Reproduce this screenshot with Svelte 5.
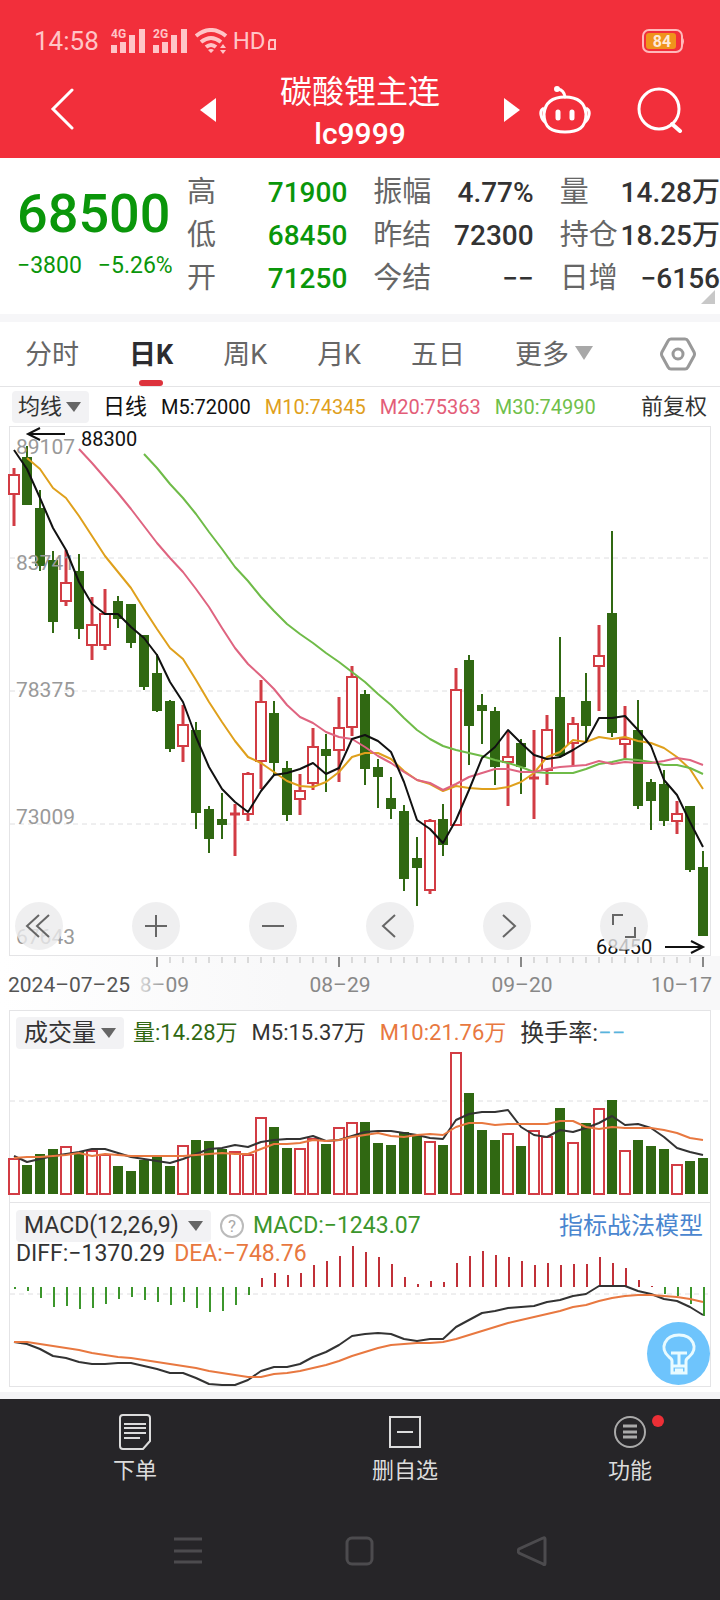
<!--
  Futures quote page: header, quote summary, daily K chart, volume, MACD, bottom bar.
  Chart rows are kept in canvas units, one column every STEP units.
-->
<script>
  const STEP = 13;
  const X0 = 14;
  const x = (i) => X0 + i * STEP;

  const tabs = ['分时', '日K', '周K', '月K', '五日'];
  let activeTab = $state('日K');

  const stats = [
    [['高', '71900', 'down'], ['低', '68450', 'down'], ['开', '71250', 'down']],
    [['振幅', '4.77%', ''], ['昨结', '72300', ''], ['今结', '−−', '']],
    [['量', '14.28万', ''], ['持仓', '18.25万', ''], ['日增', '−6156', '']],
  ];

  // [rising, high, body top, body bottom, low, volume top, macd end]
  const rows = [
    [1, 468, 474, 495, 526, 1158, 1289], [0, 446, 457, 505, 505, 1165, 1291],
    [0, 490, 508, 566, 571, 1154, 1298], [0, 551, 560, 622, 633, 1149, 1307],
    [1, 550, 582, 602, 606, 1146, 1306], [0, 554, 571, 629, 639, 1152, 1309],
    [1, 597, 624, 646, 660, 1150, 1308], [1, 589, 613, 646, 650, 1154, 1304],
    [0, 596, 601, 619, 628, 1166, 1299], [0, 604, 604, 643, 648, 1171, 1297],
    [0, 635, 635, 687, 690, 1160, 1300], [0, 654, 673, 711, 712, 1155, 1302],
    [0, 700, 701, 749, 752, 1166, 1305], [1, 705, 724, 747, 762, 1145, 1302],
    [0, 722, 730, 813, 829, 1140, 1308], [0, 806, 809, 839, 853, 1141, 1312],
    [0, 793, 819, 825, 839, 1149, 1311], [1, 804, 812, 815, 856, 1151, 1305],
    [1, 772, 773, 815, 821, 1154, 1295], [1, 680, 701, 762, 789, 1117, 1278],
    [0, 701, 713, 763, 775, 1127, 1273], [0, 761, 768, 815, 821, 1148, 1275],
    [1, 774, 790, 800, 815, 1148, 1273], [1, 728, 746, 784, 790, 1138, 1265],
    [0, 734, 749, 756, 792, 1144, 1261], [1, 697, 727, 751, 782, 1127, 1256],
    [1, 666, 676, 728, 736, 1122, 1246], [0, 690, 694, 769, 785, 1122, 1252],
    [0, 759, 767, 777, 808, 1143, 1257], [0, 777, 798, 809, 819, 1145, 1264],
    [0, 805, 811, 879, 891, 1132, 1277], [0, 837, 858, 868, 906, 1134, 1284],
    [1, 819, 820, 891, 894, 1141, 1281], [0, 804, 819, 845, 856, 1145, 1282],
    [1, 668, 689, 826, 826, 1052, 1263], [0, 655, 660, 726, 765, 1093, 1256],
    [0, 694, 705, 711, 744, 1130, 1251], [0, 707, 711, 767, 785, 1140, 1255],
    [1, 732, 756, 763, 806, 1133, 1257], [0, 739, 743, 767, 794, 1146, 1261],
    [1, 730, 776, 779, 819, 1130, 1265], [1, 715, 729, 771, 785, 1136, 1263],
    [0, 637, 697, 756, 757, 1108, 1265], [1, 717, 723, 744, 766, 1142, 1264],
    [0, 673, 701, 726, 742, 1123, 1264], [1, 625, 655, 667, 711, 1108, 1257],
    [0, 531, 613, 733, 737, 1100, 1263], [1, 706, 738, 745, 759, 1150, 1268],
    [0, 700, 730, 806, 809, 1140, 1280], [0, 779, 782, 801, 830, 1146, 1286],
    [0, 770, 784, 821, 826, 1149, 1294], [1, 801, 813, 822, 834, 1164, 1296],
    [0, 806, 806, 870, 872, 1161, 1304], [0, 851, 867, 936, 936, 1158, 1316],
  ];

  const ma5 = [450, 469, 498, 528, 550, 582, 604, 614, 614, 627, 638, 655, 682, 702, 737, 767, 789, 802, 812, 791, 775, 773, 769, 763, 774, 768, 739, 735, 741, 752, 782, 820, 829, 843, 820, 790, 758, 747, 730, 743, 755, 759, 757, 750, 742, 718, 718, 716, 730, 746, 780, 795, 822, 847];
  const ma10 = [458, 469, 488, 498, 516, 536, 556, 572, 588, 609, 629, 648, 659, 680, 702, 722, 741, 757, 763, 772, 781, 786, 787, 782, 772, 757, 753, 753, 759, 771, 780, 784, 791, 786, 788, 789, 789, 787, 782, 773, 757, 752, 740, 742, 737, 739, 737, 741, 743, 748, 757, 769, 789];
  const ma20 = [449, 463, 478, 493, 509, 526, 543, 558, 572, 589, 607, 628, 648, 664, 676, 689, 705, 717, 723, 732, 737, 739, 747, 756, 763, 772, 780, 783, 790, 784, 777, 773, 769, 769, 772, 772, 769, 767, 766, 765, 761, 764, 762, 763, 763, 761, 758, 760, 765];
  const ma30 = [454, 468, 484, 498, 514, 532, 549, 567, 581, 597, 611, 624, 634, 643, 653, 662, 672, 682, 694, 705, 718, 730, 739, 746, 750, 753, 756, 760, 763, 767, 772, 773, 773, 773, 769, 764, 762, 759, 760, 762, 765, 765, 768, 774];
  const vol5 = [1156, 1162, 1159, 1156, 1154, 1152, 1149, 1149, 1153, 1157, 1159, 1161, 1163, 1159, 1154, 1149, 1148, 1145, 1147, 1142, 1140, 1139, 1139, 1136, 1141, 1140, 1136, 1132, 1131, 1131, 1133, 1135, 1138, 1139, 1120, 1114, 1112, 1112, 1110, 1127, 1135, 1137, 1130, 1132, 1128, 1123, 1116, 1125, 1124, 1128, 1137, 1148, 1152, 1155];
  const vol10 = [1158, 1157, 1157, 1156, 1155, 1153, 1156, 1154, 1155, 1156, 1156, 1156, 1156, 1156, 1155, 1154, 1153, 1154, 1154, 1149, 1144, 1144, 1143, 1140, 1141, 1140, 1137, 1135, 1133, 1136, 1137, 1135, 1134, 1135, 1127, 1123, 1123, 1125, 1124, 1124, 1124, 1124, 1121, 1121, 1127, 1129, 1127, 1128, 1128, 1128, 1130, 1133, 1138, 1140];
  const diff = [1342, 1344, 1349, 1356, 1358, 1362, 1364, 1364, 1363, 1363, 1366, 1369, 1373, 1373, 1378, 1384, 1385, 1385, 1380, 1371, 1367, 1367, 1364, 1357, 1352, 1345, 1336, 1334, 1333, 1334, 1339, 1341, 1339, 1339, 1327, 1320, 1313, 1311, 1308, 1307, 1306, 1302, 1300, 1296, 1294, 1286, 1286, 1286, 1291, 1294, 1299, 1301, 1307, 1315];
  const dea = [1342, 1342, 1344, 1346, 1348, 1350, 1353, 1355, 1357, 1358, 1360, 1362, 1364, 1366, 1368, 1371, 1373, 1375, 1377, 1377, 1374, 1373, 1371, 1368, 1365, 1361, 1356, 1352, 1348, 1345, 1344, 1343, 1343, 1342, 1339, 1335, 1331, 1327, 1323, 1320, 1317, 1314, 1311, 1307, 1305, 1301, 1298, 1296, 1295, 1295, 1296, 1297, 1299, 1302];

  const scale = [['89107', 454], ['83741', 570], ['78375', 697], ['73009', 824], ['67643', 944]];
  const dates = [['08–29', 25], ['09–20', 39]];

  // every series ends on the last candle
  function points(list) {
    const start = rows.length - list.length;
    return list.map((y, i) => `${x(start + i)},${y}`).join(' ');
  }

  const tools = [
    ['最早', 'M24 13 12 24 24 35M34 13 22 24 34 35'],
    ['放大', 'M13 24H35M24 13V35'],
    ['缩小', 'M13 24H35'],
    ['左移', 'M29 13 17 24 29 35'],
    ['右移', 'M20 13 32 24 20 35'],
    ['全屏', 'M13 23V13H23M35 25V35H25'],
  ];
</script>

{#snippet picker(label, size)}
  <span class="picker {size}">
    <select aria-label={label}><option>{label}</option></select>
    <svg width="15" height="10" viewBox="0 0 15 10"><path d="M0 0H15L8 10Z" fill="#666" /></svg>
  </span>
{/snippet}

{#snippet signal(label)}
  <svg width="34" height="26" viewBox="0 0 34 26" fill="#ffc4c6">
    <text x="0" y="10" font-size="12" font-weight="700">{label}</text>
    <path d="M0 17h6v8H0zM9 14h6v11H9zM18 7h6v18h-6zM28 1h6v24h-6z" />
  </svg>
{/snippet}

<div class="page">
  <header>
    <div class="status">
      <time>14:58</time>
      {@render signal('4G')}
      {@render signal('2G')}
      <svg width="34" height="26" viewBox="0 0 34 26" fill="none" stroke="#ffc4c6" stroke-width="4">
        <path d="M1 8Q16-4 31 8M6 14Q16 6 26 14M11 19Q16 15 21 19" />
        <path d="M13 22 16 25 19 22Q16 20 13 22ZM25 20 28 16 31 20ZM25 22 28 26 31 22Z" fill="#ffc4c6" stroke="none" />
      </svg>
      <span class="hd">HD</span>
      <svg class="sim" width="8" height="12" viewBox="0 0 8 12"><path d="M2 2H7V11H1V4Z" fill="none" stroke="#ffc4c6" stroke-width="2" /></svg>
      <svg class="battery" width="42" height="24" viewBox="0 0 42 24">
        <rect x="1" y="1" width="39" height="22" rx="6" fill="none" stroke="#ffb9bb" stroke-width="2" />
        <path d="M41 9Q43 12 41 16Z" fill="#ffb9bb" />
        <rect x="4" y="4" width="30" height="16" rx="3" fill="#f0931c" />
        <text x="20" y="18" font-size="16" font-weight="700" text-anchor="middle" fill="#ffe9d8">84</text>
      </svg>
    </div>
    <div class="title-row">
      <button class="back" aria-label="返回">
        <svg width="26" height="42" viewBox="0 0 26 42"><path d="M22 2 3 21 22 40" fill="none" stroke="#fff" stroke-width="3" stroke-linecap="round" /></svg>
      </button>
      <div class="switcher">
        <button aria-label="上一个"><svg width="16" height="24" viewBox="0 0 16 24"><path d="M16 0V24L0 12Z" fill="#fff" /></svg></button>
        <h1><span class="name">碳酸锂主连</span><span class="code">lc9999</span></h1>
        <button aria-label="下一个"><svg width="16" height="24" viewBox="0 0 16 24"><path d="M0 0V24L16 12Z" fill="#fff" /></svg></button>
      </div>
      <div class="actions">
        <button aria-label="助手">
          <svg width="52" height="48" viewBox="0 0 52 48" fill="none" stroke="#fff" stroke-width="3">
            <path d="M26 11Q25 4 19 3" stroke-linecap="round" />
            <circle cx="18" cy="3" r="2" fill="#fff" stroke-width="2" />
            <path d="M26 11C40 11 46 17 47 28C47 42 39 46 26 46S5 42 5 28C6 17 12 11 26 11Z" />
            <path d="M5 22Q1 24 2 29T6 36M47 22Q51 24 50 29T46 36" />
            <path d="M19 26V32M33 26V32" stroke-width="5" stroke-linecap="round" />
          </svg>
        </button>
        <button aria-label="搜索">
          <svg width="46" height="46" viewBox="0 0 46 46" fill="none" stroke="#fff" stroke-width="3">
            <circle cx="22" cy="22" r="20" /><path d="M35 37 43 44" stroke-width="4" stroke-linecap="round" />
          </svg>
        </button>
      </div>
    </div>
  </header>

  <section class="quote">
    <div class="last">
      <strong>68500</strong>
      <div class="change"><span>−3800</span><span>−5.26%</span></div>
    </div>
    <div class="stats">
      {#each stats as column}
        <dl>
          {#each column as [label, value, tone]}
            <div><dt>{label}</dt><dd class={tone}>{value}</dd></div>
          {/each}
        </dl>
      {/each}
    </div>
    <svg class="corner" width="14" height="14" viewBox="0 0 14 14"><path d="M14 0V14H0Z" fill="#c8c8c8" /></svg>
  </section>

  <nav class="tabs">
    {#each tabs as tab}
      <button class:active={tab === activeTab} onclick={() => (activeTab = tab)}>{tab}</button>
    {/each}
    <button class="more" aria-haspopup="true">更多<svg width="18" height="14" viewBox="0 0 18 14"><path d="M0 0H18L9 14Z" fill="#a8a8a8" /></svg></button>
    <button class="gear" aria-label="设置">
      <svg width="36" height="36" viewBox="0 0 36 36" fill="none" stroke="#999" stroke-width="3">
        <path d="M11 3H25Q27 3 28 5L34 16Q35 18 34 20L28 31Q27 33 25 33H11Q9 33 8 31L2 20Q1 18 2 16L8 5Q9 3 11 3Z" />
        <circle cx="18" cy="18" r="5" />
      </svg>
    </button>
  </nav>

  <div class="ma-bar">
    {@render picker('均线', 'small')}
    <span class="period">日线</span>
    <span class="m5">M5:72000</span>
    <span class="m10">M10:74345</span>
    <span class="m20">M20:75363</span>
    <span class="m30">M30:74990</span>
    <button class="adjust">前复权</button>
  </div>

  <section class="panel kline">
    <svg class="plot" viewBox="10 427 700 528">
      {#each [558, 691, 824] as y}
        <line class="grid" x1="10" x2="710" y1={y} y2={y} />
      {/each}
      {#each rows as [up, high, top, bottom, low], i}
        {#if up}
          <path class="up stem" d="M{x(i)} {high}V{top}M{x(i)} {bottom}V{low}" />
          {#if bottom - top < 4}
            <path class="up stem" d="M{x(i) - 5} {top + 2}h10M{x(i)} {top}V{bottom}" />
          {:else}
            <rect class="up" x={x(i) - 5} y={top + 1} width="10" height={bottom - top - 2} />
          {/if}
        {:else}
          <path class="wick" d="M{x(i)} {high}V{low}" />
          <rect class="down" x={x(i) - 5} y={top} width="10" height={bottom - top} />
        {/if}
      {/each}
      {#each scale as [label, y]}
        <text class="scale" x="16" {y}>{label}</text>
      {/each}
      <polyline class="line" stroke="#dfa01c" points={points(ma10)} />
      <polyline class="line" stroke="#6fbb48" points={points(ma30)} />
      <polyline class="line" stroke="#df6480" points={points(ma20)} />
      <polyline class="line" stroke="#111" points={points(ma5)} />
      <path class="arrow" d="M65 434H28M40 428 28 434 40 440" />
      <text class="mark" x="81" y="446">88300</text>
      <path class="arrow" d="M665 947H703M691 941 703 947 691 953" />
      <text class="mark" x="596" y="954">68450</text>
    </svg>
    <div class="tools">
      {#each tools as [label, d]}
        <button aria-label={label}>
          <svg width="48" height="48" viewBox="0 0 48 48"><path {d} fill="none" stroke="#666" stroke-width="2" /></svg>
        </button>
      {/each}
    </div>
  </section>

  <div class="axis">
    <svg class="plot" viewBox="10 956 700 54">
      <defs>
        <linearGradient id="fade"><stop offset="0" stop-color="#ddd" /><stop offset="0.6" stop-color="#888" /></linearGradient>
      </defs>
      {#each rows as _, i}
        {#if i >= 11}
          {@const major = (i - 11) % 14 === 0}
          <path d="M{x(i)} 957v{major ? 10 : 6}" stroke={major ? '#888' : '#bbb'} stroke-width={major ? 2 : 1} />
        {/if}
      {/each}
      <text class="date first" x="8" y="992">2024–07–25</text>
      <!-- the second label is half covered by the first one -->
      <text class="date" x="189" y="992" text-anchor="end" style:fill="url(#fade)">8–09</text>
      {#each dates as [label, i]}
        <text class="date" x={x(i) + 1} y="992" text-anchor="middle">{label}</text>
      {/each}
      <text class="date" x="712" y="992" text-anchor="end">10–17</text>
    </svg>
  </div>

  <section class="panel volume">
    <div class="legend">
      {@render picker('成交量', 'large')}
      <span class="vol">量:14.28万</span>
      <span>M5:15.37万</span>
      <span class="orange">M10:21.76万</span>
      <span class="turnover">换手率:<i>−−</i></span>
    </div>
    <svg class="plot" viewBox="10 1051 700 151">
      <line class="grid" x1="10" x2="710" y1="1101" y2="1101" />
      {#each rows as row, i}
        {#if row[0]}
          <rect class="up" x={x(i) - 5} y={row[5] + 1} width="10" height={1193 - row[5]} />
        {:else}
          <rect class="down" x={x(i) - 5} y={row[5]} width="10" height={1194 - row[5]} />
        {/if}
      {/each}
      <polyline class="line" stroke="#333" points={points(vol5)} />
      <polyline class="line" stroke="#e87840" points={points(vol10)} />
    </svg>
  </section>

  <section class="panel macd">
    <svg class="plot" viewBox="10 1203 700 183">
      <line class="grid" x1="10" x2="710" y1="1294" y2="1294" />
      {#each rows as row, i}
        <path d="M{x(i) + 1} 1287V{row[6]}" stroke={row[6] > 1287 ? '#3c962c' : '#c03038'} stroke-width="2" />
      {/each}
      <polyline class="line" stroke="#333" points={points(diff)} />
      <polyline class="line" stroke="#e87840" points={points(dea)} />
    </svg>
    <div class="readout">
      <div class="row">
        {@render picker('MACD(12,26,9)', 'large')}
        <button class="help" aria-label="说明">?</button>
        <span class="green">MACD:−1243.07</span>
        <a href="#model">指标战法模型</a>
      </div>
      <div class="row second">
        <span>DIFF:−1370.29</span>
        <span class="orange">DEA:−748.76</span>
      </div>
    </div>
    <button class="bulb" aria-label="提示">
      <svg width="63" height="63" viewBox="0 0 63 63" fill="none" stroke="#e9fbff" stroke-width="3">
        <path d="M25 44V39Q25 37 22 35C12 26 18 13 32 13S52 26 42 35Q39 37 39 39V44M24 31H40M32 31V44M25 44H39V51H25ZM28 48H36" />
      </svg>
    </button>
  </section>

  <footer>
    <div class="menu">
      <button>
        <svg width="34" height="36" viewBox="0 0 34 36" fill="none" stroke="#dcdcdc" stroke-width="2">
          <path d="M5 1H29Q32 1 32 4V27L25 35H5Q2 35 2 32V4Q2 1 5 1ZM6 10H28M6 14H28M6 19H28M6 24H22" />
        </svg>
        下单
      </button>
      <button>
        <svg width="34" height="36" viewBox="0 0 34 36" fill="none" stroke="#dcdcdc" stroke-width="2"><path d="M2 3H32V33H2ZM9 18H25" /></svg>
        删自选
      </button>
      <button class="wide">
        <svg width="34" height="36" viewBox="0 0 34 36" fill="none" stroke="#aaa" stroke-width="2">
          <circle cx="17" cy="18" r="15" /><path d="M10 12H24M10 18H24M10 23H24" stroke-width="3" />
        </svg>
        <i class="dot"></i>
        功能
      </button>
    </div>
    <div class="system">
      <button aria-label="任务"><svg width="30" height="30" viewBox="0 0 30 30"><path d="M1 3H29M1 15H29M1 26H29" /></svg></button>
      <button aria-label="主页"><svg width="30" height="30" viewBox="0 0 30 30"><rect x="2" y="2" width="25" height="26" rx="5" /></svg></button>
      <button aria-label="后退"><svg width="30" height="30" viewBox="0 0 30 30"><path d="M26 2Q28 1 28 3V27Q28 30 26 28L2 17Q0 15 2 13Z" /></svg></button>
    </div>
  </footer>
</div>

<style>
  :global(body) {
    background: #262528;
  }

  .page {
    background: #fff;
    font-family: Roboto, 'Noto Sans CJK SC', sans-serif;
    color: #333;
    overflow: hidden;
  }

  button {
    background: none;
    border: 0;
    padding: 0;
    color: inherit;
    font: inherit;
    cursor: pointer;
  }
  svg { display: block; flex-shrink: 0; }
  i { font-style: normal; }

  header {
    background: #f22f3b;
    color: #fff;
  }
  .status {
    display: flex;
    align-items: center;
    height: 54px;
    padding: 14px 36px 0 34px;
    gap: 8px;
    color: #ffc4c6;
    font-size: 26px;
  }
  .status time { margin-right: 4px; }
  .hd { margin-left: -4px; font-size: 24px; }
  .sim { margin: 6px 0 0 -6px; }
  .battery { margin-left: auto; }

  .title-row {
    display: grid;
    grid-template-columns: 1fr minmax(0, 320px) 1fr;
    align-items: center;
    height: 90px;
  }
  .back { justify-self: start; margin: 0 0 8px 50px; }
  .switcher {
    display: flex;
    align-items: center;
    justify-content: space-between;
  }
  .switcher button { padding-bottom: 6px; }
  h1 {
    display: flex;
    flex-direction: column;
    align-items: center;
    margin: 0;
    font-weight: 500;
    line-height: 41px;
  }
  .name { font-size: 32px; font-weight: 400; }
  .code { font-size: 30px; }
  .actions {
    display: flex;
    align-items: center;
    gap: 46px;
    padding: 0 0 6px 19px;
  }

  .quote {
    display: flex;
    position: relative;
    height: 143px;
    padding-top: 13px;
    border-bottom: 8px solid #f6f6f8;
  }
  .last {
    flex: 0 0 187px;
    padding: 13px 0 0 17px;
    box-sizing: border-box;
    color: #0a960a;
  }
  .last strong {
    display: block;
    font-size: 54px;
    line-height: 60px;
    font-weight: 500;
  }
  .change {
    display: flex;
    gap: 16px;
    padding-top: 8px;
    font-size: 23px;
    line-height: 28px;
    white-space: nowrap;
  }
  .stats {
    flex: 1;
    display: grid;
    grid-template-columns: repeat(3, minmax(0, 1fr));
    gap: 26px;
    font-size: 28px;
    line-height: 43px;
  }
  dl { margin: 0; }
  dl div {
    display: flex;
    justify-content: space-between;
    white-space: nowrap;
  }
  dt { color: #666; font-size: 29px; }
  dd { margin: 0; font-weight: 500; }
  .down { color: #0a960a; }
  .corner { position: absolute; right: 5px; bottom: 10px; }

  .tabs {
    display: flex;
    align-items: center;
    gap: 50px;
    height: 64px;
    padding: 0 24px 0 25px;
    border-bottom: 1px solid #e4e4e6;
    font-size: 27px;
    color: #666;
  }
  .tabs button {
    position: relative;
    display: flex;
    align-items: center;
    gap: 6px;
    height: 64px;
    padding-bottom: 3px;
    white-space: nowrap;
  }
  .tabs .active { color: #2c2c30; font-weight: 700; }
  .tabs .active::after {
    content: '';
    position: absolute;
    left: calc(50% - 12px);
    bottom: 0;
    width: 24px;
    height: 6px;
    border-radius: 3px;
    background: #dd323c;
  }
  .tabs .gear { margin-left: auto; padding: 0; }

  .picker {
    position: relative;
    display: flex;
    align-items: center;
    background: #f2f2f4;
    border-radius: 4px;
  }
  .picker select {
    appearance: none;
    background: none;
    border: 0;
    height: 32px;
    font: inherit;
    color: #333;
  }
  .picker svg {
    position: absolute;
    right: 8px;
    pointer-events: none;
  }
  .small select { padding: 0 26px 0 6px; }
  .large select { padding: 0 28px 0 8px; font-size: 24px; }

  .ma-bar {
    display: flex;
    align-items: center;
    gap: 14px;
    height: 39px;
    padding: 0 13px 0 12px;
    font-size: 20px;
    line-height: 32px;
    white-space: nowrap;
    color: #111;
  }
  .ma-bar .picker, .period, .adjust { font-size: 22px; }
  .m10 { color: #dfa01c; }
  .m20 { color: #e35d78; }
  .m30 { color: #6fbf4b; }
  .adjust { margin-left: auto; color: #333; }

  .panel {
    position: relative;
    margin: 0 9px;
    border: 1px solid #e4e4e6;
  }
  .plot {
    width: 100%;
    overflow: visible;
  }
  .grid { stroke: #dedee0; stroke-width: 1; stroke-dasharray: 5 4; }
  .line { fill: none; stroke-width: 2; stroke-linejoin: round; }
  .plot .up { fill: #fff; stroke: #d23c44; stroke-width: 2; }
  .plot .stem { stroke-width: 3; }
  .plot .down { fill: #306812; }
  .wick { stroke: #306812; stroke-width: 2; }
  .scale { font-size: 21px; fill: #999; }
  .mark { font-size: 20px; fill: #111; }
  .arrow { fill: none; stroke: #111; stroke-width: 2; }

  .tools {
    position: absolute;
    left: 5px;
    right: 62px;
    bottom: 5px;
    display: flex;
    justify-content: space-between;
  }
  .tools button {
    border-radius: 50%;
    background: rgba(235, 235, 236, 0.8);
  }

  .axis {
    padding: 0 10px;
    background: linear-gradient(90deg, #fff, #f8f8f9 40%);
  }
  .date { font-size: 21px; fill: #888; }
  .first { fill: #555; }

  .volume { border-bottom: 0; }
  .legend {
    display: flex;
    align-items: center;
    gap: 14px;
    height: 40px;
    padding: 4px 0 0 6px;
    box-sizing: border-box;
    font-size: 22px;
    line-height: 32px;
    white-space: nowrap;
  }
  .vol { margin-left: -5px; color: #306812; }
  .turnover { font-size: 24px; }
  .turnover i { color: #58b4dc; }
  .orange { color: #e87840; }

  .macd {
    display: grid;
    margin-bottom: 5px;
  }
  .macd > .plot, .readout { grid-area: 1 / 1; }
  .readout {
    padding: 7px 7px 0 6px;
    font-size: 23px;
    line-height: 32px;
    white-space: nowrap;
  }
  .macd .large select { padding-right: 32px; font-size: 23px; }
  .row {
    display: flex;
    align-items: center;
    gap: 9px;
    height: 32px;
  }
  .second { height: 24px; }
  .green { color: #3c962c; }
  .row a {
    margin-left: auto;
    color: #4a86cf;
    font-size: 24px;
    text-decoration: none;
  }
  .help {
    width: 24px;
    height: 24px;
    border: 2px solid #bbb;
    border-radius: 50%;
    color: #aaa;
    font-size: 17px;
    line-height: 20px;
  }
  .bulb {
    position: absolute;
    right: 0;
    bottom: 1px;
    border-radius: 50%;
    background: #6ec4fc;
  }

  footer {
    border-top: 7px solid #f4f4f6;
    background: #262528;
    color: #dcdcdc;
  }
  .menu { display: flex; }
  .menu button {
    position: relative;
    flex: 3;
    display: flex;
    flex-direction: column;
    align-items: center;
    gap: 5px;
    padding-top: 15px;
    font-size: 22px;
    line-height: 32px;
  }
  .menu .wide { flex: 2; }
  .dot {
    position: absolute;
    top: 16px;
    left: calc(50% + 22px);
    width: 12px;
    height: 12px;
    border-radius: 50%;
    background: #ec2f36;
  }
  .system {
    display: flex;
    justify-content: space-around;
    padding: 49px 102px 34px;
  }
  .system svg { fill: none; stroke: #4c4b4e; stroke-width: 3; }
</style>
